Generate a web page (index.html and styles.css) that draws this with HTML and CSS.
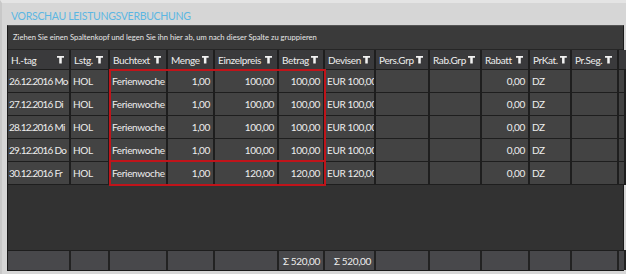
FILE: index.html
```html
<!DOCTYPE html>
<html lang="de">
<head>
  <meta charset="UTF-8">
  <title>Vorschau Leistungsverbuchung</title>
  <link rel="stylesheet" href="styles.css">
</head>
<body>
  <div class="window">
    <div class="title">VORSCHAU LEISTUNGSVERBUCHUNG</div>
    <div class="grid">
      <div class="group-panel">Ziehen Sie einen Spaltenkopf und legen Sie ihn hier ab, um nach dieser Spalte zu gruppieren</div>

      <div class="row head">
        <div class="cell">H.-tag<span class="filter"></span></div>
        <div class="cell">Lstg.<span class="filter"></span></div>
        <div class="cell">Buchtext<span class="filter"></span></div>
        <div class="cell">Menge<span class="filter"></span></div>
        <div class="cell">Einzelpreis<span class="filter"></span></div>
        <div class="cell">Betrag<span class="filter"></span></div>
        <div class="cell">Devisen<span class="filter"></span></div>
        <div class="cell">Pers.Grp<span class="filter"></span></div>
        <div class="cell">Rab.Grp<span class="filter"></span></div>
        <div class="cell">Rabatt<span class="filter"></span></div>
        <div class="cell">PrKat.<span class="filter"></span></div>
        <div class="cell">Pr.Seg.<span class="filter"></span></div>
        <div class="cell"></div>
      </div>

      <div class="body">
        <div class="row data">
          <div class="cell date">26.12.2016 Mo</div>
          <div class="cell">HOL</div>
          <div class="cell">Ferienwoche</div>
          <div class="cell num">1,00</div>
          <div class="cell num">100,00</div>
          <div class="cell num">100,00</div>
          <div class="cell">EUR 100,00</div>
          <div class="cell"></div>
          <div class="cell"></div>
          <div class="cell num">0,00</div>
          <div class="cell">DZ</div>
          <div class="cell"></div>
          <div class="cell"></div>
        </div>
        <div class="row data">
          <div class="cell date">27.12.2016 Di</div>
          <div class="cell">HOL</div>
          <div class="cell">Ferienwoche</div>
          <div class="cell num">1,00</div>
          <div class="cell num">100,00</div>
          <div class="cell num">100,00</div>
          <div class="cell">EUR 100,00</div>
          <div class="cell"></div>
          <div class="cell"></div>
          <div class="cell num">0,00</div>
          <div class="cell">DZ</div>
          <div class="cell"></div>
          <div class="cell"></div>
        </div>
        <div class="row data">
          <div class="cell date">28.12.2016 Mi</div>
          <div class="cell">HOL</div>
          <div class="cell">Ferienwoche</div>
          <div class="cell num">1,00</div>
          <div class="cell num">100,00</div>
          <div class="cell num">100,00</div>
          <div class="cell">EUR 100,00</div>
          <div class="cell"></div>
          <div class="cell"></div>
          <div class="cell num">0,00</div>
          <div class="cell">DZ</div>
          <div class="cell"></div>
          <div class="cell"></div>
        </div>
        <div class="row data">
          <div class="cell date">29.12.2016 Do</div>
          <div class="cell">HOL</div>
          <div class="cell">Ferienwoche</div>
          <div class="cell num">1,00</div>
          <div class="cell num">100,00</div>
          <div class="cell num">100,00</div>
          <div class="cell">EUR 100,00</div>
          <div class="cell"></div>
          <div class="cell"></div>
          <div class="cell num">0,00</div>
          <div class="cell">DZ</div>
          <div class="cell"></div>
          <div class="cell"></div>
        </div>
        <div class="row data">
          <div class="cell date">30.12.2016 Fr</div>
          <div class="cell">HOL</div>
          <div class="cell">Ferienwoche</div>
          <div class="cell num">1,00</div>
          <div class="cell num">120,00</div>
          <div class="cell num">120,00</div>
          <div class="cell">EUR 120,00</div>
          <div class="cell"></div>
          <div class="cell"></div>
          <div class="cell num">0,00</div>
          <div class="cell">DZ</div>
          <div class="cell"></div>
          <div class="cell"></div>
        </div>

        <!-- markings drawn over the grid -->
        <div class="mark mark-a"></div>
        <div class="mark mark-b"></div>
      </div>

      <div class="empty"></div>

      <div class="row foot">
        <div class="cell"></div>
        <div class="cell"></div>
        <div class="cell"></div>
        <div class="cell"></div>
        <div class="cell"></div>
        <div class="cell num">&Sigma; 520,00</div>
        <div class="cell num">&Sigma; 520,00</div>
        <div class="cell"></div>
        <div class="cell"></div>
        <div class="cell"></div>
        <div class="cell"></div>
        <div class="cell"></div>
        <div class="cell"></div>
      </div>
    </div>
  </div>
</body>
</html>
```

FILE: styles.css
```css
body {
  margin: 0;
  background: #d5d5d5;
  font-family: Lato, "Noto Sans", sans-serif;
}
.window {
  width: 626px;
  height: 274px;
  box-sizing: border-box;
  padding: 0 2px 0 5px;
  border-top: 3px solid #e4e4e4;
  border-left: 2px solid #c8c8c8;
  background: #d6d6d6;
}
.title {
  height: 22px;
  padding-left: 4px;
  line-height: 26px;
  font-size: 10.5px;
  letter-spacing: -0.3px;
  color: #5cb6e2;
}
.grid {
  background: #333333;
  border: 1px solid #1a1a1a;
  border-top-color: #555;
}
.group-panel {
  height: 23px;
  line-height: 23px;
  padding-left: 5px;
  font-size: 7.6px;
  color: #e6e6e6;
  background: #3a3a3a;
  border-bottom: 1px solid #262626;
}
.row {
  display: grid;
  grid-template-columns: 63px 39px 58px 47px 64px 46px 51px 54px 52px 48px 42px 47px 1fr;
}
.cell {
  box-sizing: border-box;
  border-right: 2px solid #1e1e1e;
  color: #eeeeee;
  font-size: 10px;
  letter-spacing: -0.35px;
  padding: 0 3px 0 2px;
  white-space: nowrap;
  overflow: hidden;
}
.date {
  letter-spacing: -0.75px;
  padding: 0;
}
.head .cell {
  height: 20px;
  line-height: 20px;
  background: #3a3a3c;
  border-bottom: 1px solid #1e1e1e;
  display: flex;
  justify-content: space-between;
  align-items: center;
  gap: 2px;
  padding: 0 5px 0 3px;
}
.filter {
  width: 7px;
  height: 8px;
  flex: none;
  background: #f2f2f2;
  clip-path: polygon(0 0, 100% 0, 100% 28%, 68% 28%, 68% 100%, 32% 100%, 32% 28%, 0 28%);
}
.body {
  position: relative;
}
.data .cell {
  height: 23px;
  line-height: 22px;
  background: #434343;
  border-bottom: 1px solid #1e1e1e;
}
.data .date {
  padding-left: 1px;
}
.num {
  text-align: right;
}
.empty {
  height: 65px;
  background: #323232;
}
.foot .cell {
  height: 20px;
  line-height: 20px;
  background: #48484b;
  border-top: 1px solid #1e1e1e;
  border-right: 2px solid #222;
}
.mark {
  position: absolute;
  border: 2px solid #c0141a;
}
.mark-a {
  left: 101px;
  top: -1px;
  width: 213px;
  height: 89px;
}
.mark-b {
  left: 101px;
  top: 90px;
  width: 213px;
  height: 22px;
}
```
